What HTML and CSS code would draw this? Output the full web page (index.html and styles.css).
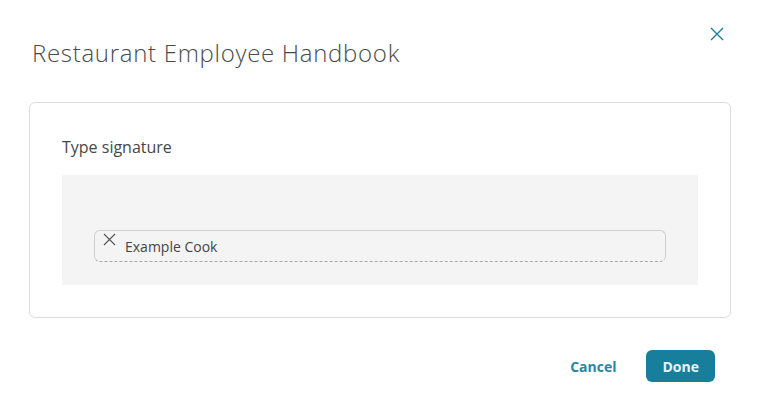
FILE: index.html
```html
<!DOCTYPE html>
<html>
<head>
<meta charset="utf-8">
<link rel="stylesheet" href="styles.css">
</head>
<body>
<div class="dialog">
  <div class="header">
    <h1 class="title">Restaurant Employee Handbook</h1>
    <button class="close" aria-label="Close">
      <svg width="14" height="14" viewBox="0 0 14 14"><path d="M1 1 L13 13 M13 1 L1 13" stroke="#1b7f9b" stroke-width="1.4" fill="none"/></svg>
    </button>
  </div>
  <div class="card">
    <div class="label">Type signature</div>
    <div class="pad">
      <div class="field">
        <svg class="clear" width="13" height="13" viewBox="0 0 13 13"><path d="M1 1 L12 12 M12 1 L1 12" stroke="#555" stroke-width="1.1" fill="none"/></svg>
        <span class="sig">Example Cook</span>
      </div>
    </div>
  </div>
  <div class="footer">
    <button class="btn cancel">Cancel</button>
    <button class="btn done">Done</button>
  </div>
</div>
</body>
</html>
```
FILE: styles.css
```css
html, body {
  margin: 0;
  padding: 0;
  background: #fff;
  font-family: "Open Sans", "Noto Sans", sans-serif;
}
.dialog {
  width: 759px;
  height: 409px;
  box-sizing: border-box;
  padding: 0 28px 0 29px;
}
.header {
  display: flex;
  justify-content: space-between;
  align-items: flex-start;
  height: 102px;
}
.title {
  margin: 37px 0 0 3px;
  font-size: 24px;
  line-height: 32px;
  font-weight: 300;
  color: #4a4a4a;
  letter-spacing: 0.7px;
}
.close {
  margin: 26px 0 0 0;
  width: 16px;
  height: 16px;
  padding: 1px;
  border: 0;
  background: none;
  display: flex;
  align-items: center;
  justify-content: center;
  transform: translateX(-6px);
}
.card {
  width: 702px;
  box-sizing: border-box;
  border: 1px solid #dcdcdc;
  border-radius: 6px;
  padding: 32px 32px 32px 32px;
}
.label {
  font-size: 16px;
  line-height: 24px;
  color: #474747;
  margin-bottom: 16px;
}
.pad {
  background: #f4f4f4;
  padding: 55px 32px 23px 32px;
}
.field {
  height: 32px;
  box-sizing: border-box;
  border: 1px solid #cfcfcf;
  border-bottom: 1px dashed #a9a9a9;
  border-radius: 6px;
  display: flex;
  align-items: flex-start;
}
.clear {
  margin: 2px 0 0 8px;
}
.sig {
  margin: 6px 0 0 9px;
  font-size: 14px;
  line-height: 20px;
  color: #444;
}
.footer {
  display: flex;
  justify-content: flex-end;
  gap: 14px;
  margin-top: 32px;
  padding-right: 16px;
}
.btn {
  font-family: "Open Sans", "Noto Sans", sans-serif;
  font-size: 14px;
  font-weight: 700;
  height: 32px;
  border: 0;
  border-radius: 6px;
  padding: 0 16px;
  cursor: pointer;
  letter-spacing: 0;
}
.cancel {
  background: none;
  color: #2a86a3;
}
.done {
  background: #177f9b;
  color: #e8f3f6;
}
```
